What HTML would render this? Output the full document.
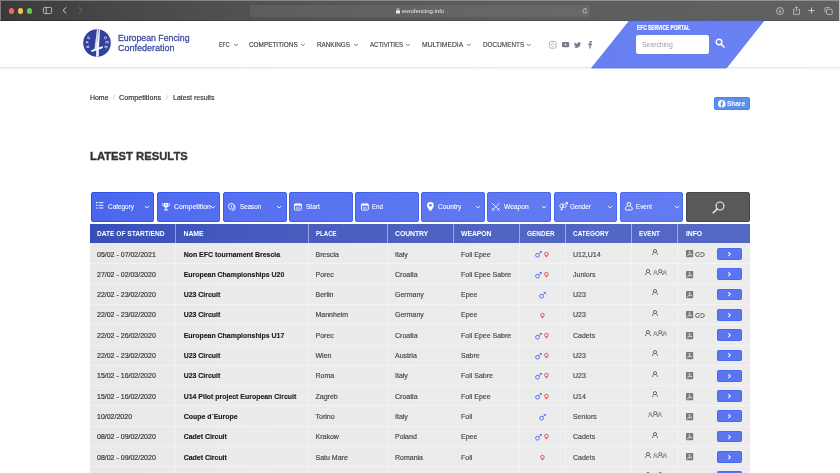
<!DOCTYPE html>
<html>
<head>
<meta charset="utf-8">
<style>
*{box-sizing:border-box;margin:0;padding:0}
html,body{width:840px;height:473px;overflow:hidden;background:#fff;font-family:"Liberation Sans",sans-serif;color:#222}
.t{position:absolute;white-space:nowrap}
.a{position:absolute}
svg{position:absolute;overflow:visible}
#chrome{position:absolute;left:0;top:0;width:839px;height:20.5px;background:#3a3a3a;border-top:1px solid rgba(255,255,255,.3);border-left:1px solid #7d7d7d;border-bottom:1px solid rgba(0,0,0,.25)}
#chr2{position:absolute;left:839px;top:0;width:1px;height:20.5px;background:#b5b5b5}
.tl{position:absolute;top:7.8px;width:5.8px;height:5.8px;border-radius:50%}
#url{position:absolute;left:249.5px;top:5px;width:340.5px;height:11.8px;border-radius:2.5px;background:rgba(255,255,255,.07)}
#ov{position:absolute;left:0;top:0;width:840px;height:473px;background:linear-gradient(to right,rgba(255,255,255,0.000) 0.00%,rgba(255,255,255,0.038) 7.14%,rgba(255,255,255,0.069) 14.29%,rgba(255,255,255,0.095) 21.43%,rgba(255,255,255,0.116) 28.57%,rgba(255,255,255,0.133) 35.71%,rgba(255,255,255,0.147) 42.86%,rgba(255,255,255,0.158) 50.00%,rgba(255,255,255,0.168) 57.14%,rgba(255,255,255,0.175) 64.29%,rgba(255,255,255,0.182) 71.43%,rgba(255,255,255,0.187) 78.57%,rgba(255,255,255,0.191) 85.71%,rgba(255,255,255,0.194) 92.86%,rgba(255,255,255,0.197) 100.00%)}
#hdrline{position:absolute;left:0;top:66.8px;width:840px;height:1.4px;background:#e4e4e4}
#hdrsh{position:absolute;left:0;top:68.2px;width:840px;height:1.6px;background:linear-gradient(#f0f0f0,#fff)}
.fb{position:absolute;top:191.6px;width:63.7px;height:30.1px;background:#3f5dee;border:1px solid #1f48ea;border-radius:2px}
.row{position:absolute;left:90px;width:660px;height:20.3px;background:#e8e8e8;border-bottom:1px solid #efefef}
.vs{position:absolute;top:243.5px;width:1px;height:230px;background:#f0f0f0}
.hs{position:absolute;top:223.8px;width:1px;height:19.3px;background:#8894dc}
.go{position:absolute;left:717px;width:25px;height:11.8px;background:#3354ef;border:1px solid #1c45ec;border-radius:1.5px}
</style>
</head>
<body>
<div id="wrap" style="position:absolute;left:0;top:0;width:840px;height:473px;will-change:transform">
<div id="chrome"></div><div id="chr2"></div>
<div class="tl" style="left:8.6px;background:#ee6a5f"></div>
<div class="tl" style="left:17.6px;background:#f5bf4f"></div>
<div class="tl" style="left:26.5px;background:#62c655"></div>
<div id="url"></div>
<svg style="left:43px;top:7px" width="9" height="7" viewBox="0 0 9 7"><rect x="0.4" y="0.4" width="8.2" height="6.2" rx="1.2" fill="none" stroke="#cfcfcf" stroke-width="0.8"/><line x1="3.2" y1="0.4" x2="3.2" y2="6.6" stroke="#cfcfcf" stroke-width="0.8"/></svg>
<svg style="left:62px;top:7.3px" width="5" height="7" viewBox="0 0 5 7"><path d="M4 0.5 L1 3.3 L4 6.1" fill="none" stroke="#e4e4e4" stroke-width="0.9" stroke-linecap="round" stroke-linejoin="round"/></svg>
<svg style="left:78px;top:7.3px" width="5" height="7" viewBox="0 0 5 7"><path d="M1 0.5 L4 3.3 L1 6.1" fill="none" stroke="#6a6a6a" stroke-width="0.9" stroke-linecap="round" stroke-linejoin="round"/></svg>
<svg style="left:396.3px;top:8px" width="4" height="6" viewBox="0 0 4 6"><rect x="0" y="2.2" width="4" height="3.3" rx="0.5" fill="#e6e6e6"/><path d="M0.9 2.4 V1.5 A1.1 1.1 0 0 1 3.1 1.5 V2.4" fill="none" stroke="#e6e6e6" stroke-width="0.6"/></svg>
<svg style="left:582px;top:8px" width="6" height="6" viewBox="0 0 6 6"><path d="M5 3 A2.1 2.1 0 1 1 3.8 1.1" fill="none" stroke="#c8c8c8" stroke-width="0.7"/><path d="M3.2 0 L4.8 1.1 L3.2 2.2 Z" fill="#c8c8c8"/></svg>
<svg style="left:776px;top:6.5px" width="8" height="8" viewBox="0 0 8 8"><circle cx="4" cy="4" r="3.5" fill="none" stroke="#cfcfcf" stroke-width="0.7"/><path d="M4 2.2 V5.4 M2.8 4.3 L4 5.5 L5.2 4.3" fill="none" stroke="#cfcfcf" stroke-width="0.7"/></svg>
<svg style="left:792.5px;top:5.5px" width="7" height="9" viewBox="0 0 7 9"><path d="M2 3.2 H0.6 V8.3 H6.4 V3.2 H5" fill="none" stroke="#cfcfcf" stroke-width="0.7"/><path d="M3.5 5.5 V0.8 M2.2 2 L3.5 0.7 L4.8 2" fill="none" stroke="#cfcfcf" stroke-width="0.7"/></svg>
<svg style="left:808px;top:7.3px" width="7" height="7" viewBox="0 0 7 7"><path d="M3.5 0.5 V6.5 M0.5 3.5 H6.5" fill="none" stroke="#d6d6d6" stroke-width="0.8"/></svg>
<svg style="left:823.5px;top:6.5px" width="9" height="8" viewBox="0 0 9 8"><rect x="2.6" y="2.2" width="5.6" height="5.3" rx="1.1" fill="#3a3a3a" stroke="#cfcfcf" stroke-width="0.7"/><path d="M1 5.6 V1.6 A1 1 0 0 1 2 0.6 H5.6" fill="none" stroke="#cfcfcf" stroke-width="0.7"/></svg>
<div id="hdrline"></div><div id="hdrsh"></div>
<svg style="left:0;top:0" width="840" height="80" viewBox="0 0 840 80"><polygon points="629.3,21 763.7,21 726.4,68 591.6,68" fill="#4663ef" stroke="#2a50ec" stroke-width="0.8"/></svg>
<div class="a" style="left:635.8px;top:34.7px;width:73px;height:19.5px;background:#fff;border-radius:2.2px"></div>
<svg style="left:714.5px;top:38px" width="10" height="10" viewBox="0 0 10 10"><circle cx="4" cy="4" r="2.8" fill="none" stroke="#fff" stroke-width="1.4"/><path d="M6.2 6.2 L9 9" stroke="#fff" stroke-width="1.6" stroke-linecap="round"/></svg>
<svg style="left:82.6px;top:29.1px" width="28" height="28" viewBox="0 0 28 28">
<circle cx="14" cy="14" r="13.8" fill="#243697"/>
<path d="M14 0.300 L15.300 0.300 L13.600 21 L11.200 21.500 Z" fill="#dde1f2"/>
<path d="M15.900 0.300 L17 0.600 L15.900 19 L15.700 27.600 L13.100 27.700 L13.400 19 L14.600 10 Z" fill="#f6f7fc"/>
<path d="M8.100 21.300 L19.500 17.300 L20 18.900 L8.700 23 Z" fill="#fff"/>
<path id="arcL" d="M6.8 18.3 A 8.4 8.4 0 0 1 8.06 8.06" fill="none"/>
<path id="arcR" d="M20.5 8.4 A 8.4 8.4 0 0 1 20.5 19.6" fill="none"/>
<text font-family="Liberation Sans" font-weight="bold" font-size="3.9" fill="#fff" letter-spacing="1.3"><textPath href="#arcL">EFC</textPath></text>
<text font-family="Liberation Sans" font-weight="bold" font-size="3.9" fill="#fff" letter-spacing="1.3"><textPath href="#arcR">CEE</textPath></text>
</svg>
<svg style="left:233.70px;top:43.60px" width="3.8" height="2.0" viewBox="0 0 3.8 2.0"><path d="M0.3 0.3 L1.90 1.70 L3.50 0.3" fill="none" stroke="#444" stroke-width="0.80" stroke-linecap="round" stroke-linejoin="round"/></svg>
<svg style="left:301.40px;top:43.60px" width="3.8" height="2.0" viewBox="0 0 3.8 2.0"><path d="M0.3 0.3 L1.90 1.70 L3.50 0.3" fill="none" stroke="#444" stroke-width="0.80" stroke-linecap="round" stroke-linejoin="round"/></svg>
<svg style="left:354.10px;top:43.60px" width="3.8" height="2.0" viewBox="0 0 3.8 2.0"><path d="M0.3 0.3 L1.90 1.70 L3.50 0.3" fill="none" stroke="#444" stroke-width="0.80" stroke-linecap="round" stroke-linejoin="round"/></svg>
<svg style="left:406.40px;top:43.60px" width="3.8" height="2.0" viewBox="0 0 3.8 2.0"><path d="M0.3 0.3 L1.90 1.70 L3.50 0.3" fill="none" stroke="#444" stroke-width="0.80" stroke-linecap="round" stroke-linejoin="round"/></svg>
<svg style="left:466.60px;top:43.60px" width="3.8" height="2.0" viewBox="0 0 3.8 2.0"><path d="M0.3 0.3 L1.90 1.70 L3.50 0.3" fill="none" stroke="#444" stroke-width="0.80" stroke-linecap="round" stroke-linejoin="round"/></svg>
<svg style="left:527.40px;top:43.60px" width="3.8" height="2.0" viewBox="0 0 3.8 2.0"><path d="M0.3 0.3 L1.90 1.70 L3.50 0.3" fill="none" stroke="#444" stroke-width="0.80" stroke-linecap="round" stroke-linejoin="round"/></svg>
<svg style="left:549.2px;top:40.9px" width="7.6" height="7.6" viewBox="0 0 7.6 7.6"><rect x="0.4" y="0.4" width="6.8" height="6.8" rx="1.8" fill="none" stroke="#8b8b8b" stroke-width="0.8"/><circle cx="3.8" cy="3.8" r="1.5" fill="none" stroke="#a0a0a0" stroke-width="0.7"/></svg>
<svg style="left:562px;top:42px" width="7.2" height="5.2" viewBox="0 0 7.2 5.2"><rect x="0" y="0" width="7.2" height="5.2" rx="1.2" fill="#5c5e70"/><path d="M2.9 1.5 L4.7 2.6 L2.9 3.7 Z" fill="#fff"/></svg>
<svg style="left:573.8px;top:41.8px" width="7.2" height="6.2" viewBox="0 0 24 20"><path d="M23.6 2.4c-.9.4-1.8.7-2.8.8 1-.6 1.800-1.600 2.100-2.700-.9.600-2 1-3.100 1.200C18.900.7 17.600.1 16.300.1c-2.700 0-4.900 2.200-4.900 4.900 0 .4 0 .8.100 1.100C7.500 5.900 3.900 4 1.500.9 1.100 1.700.8 2.500.8 3.400c0 1.700.9 3.200 2.200 4.100-.8 0-1.600-.2-2.200-.6v.1c0 2.400 1.700 4.400 3.900 4.800-.4.100-.8.200-1.300.2-.3 0-.6 0-.9-.1.600 2 2.400 3.400 4.600 3.400-1.700 1.300-3.800 2.100-6.100 2.100-.4 0-.8 0-1.200-.1 2.200 1.400 4.800 2.200 7.500 2.200 9.100 0 14-7.500 14-14v-.6c1-.7 1.800-1.600 2.400-2.500z" fill="#5c5e70"/></svg>
<svg style="left:588px;top:41px" width="4.2" height="7.6" viewBox="0 0 10 18"><path d="M6.600 18V9.800h2.700l.4-3.200H6.600V4.600c0-.9.300-1.600 1.600-1.600h1.700V.1C9.600.1 8.600 0 7.500 0 5.100 0 3.400 1.500 3.400 4.200v2.400H.6v3.200h2.800V18z" fill="#5c5e70"/></svg>
<div class="a" style="left:714px;top:97.2px;width:36px;height:13px;background:#3377ea;border:1px solid #1669e6;border-radius:1.8px"></div>
<svg style="left:717.5px;top:100.4px" width="7.6" height="7.6" viewBox="0 0 7.6 7.6"><circle cx="3.8" cy="3.8" r="3.8" fill="#fff"/><path d="M4.25 7.6 V4.6 H5.2 L5.35 3.5 H4.25 V2.9 C4.25 2.5 4.4 2.3 4.85 2.3 H5.4 V1.3 C5.2 1.25 4.85 1.2 4.5 1.2 C3.6 1.2 3.05 1.75 3.05 2.7 V3.5 H2.2 V4.6 H3.05 V7.6 Z" fill="#3377ea"/></svg>
<div class="fb" style="left:90.65px"></div>
<div class="fb" style="left:156.78px"></div>
<div class="fb" style="left:222.91px"></div>
<div class="fb" style="left:289.04px"></div>
<div class="fb" style="left:355.17px"></div>
<div class="fb" style="left:421.30px"></div>
<div class="fb" style="left:487.43px"></div>
<div class="fb" style="left:553.56px"></div>
<div class="fb" style="left:619.69px"></div>
<div class="fb" style="left:685.9px;width:63.8px;background:#323232;border-color:#1c1c1c"></div>
<svg style="left:711.5px;top:200.5px" width="14" height="13" viewBox="0 0 14 13"><circle cx="8" cy="5" r="4" fill="none" stroke="#f2f2f2" stroke-width="1.1"/><path d="M5.2 8 L1.2 11.8" stroke="#f2f2f2" stroke-width="1.5" stroke-linecap="round"/></svg>
<svg style="left:144.90px;top:205.85px" width="4.2" height="2.3" viewBox="0 0 4.2 2.3"><path d="M0.3 0.3 L2.10 2.00 L3.90 0.3" fill="none" stroke="#fff" stroke-width="0.90" stroke-linecap="round" stroke-linejoin="round"/></svg>
<svg style="left:211.10px;top:205.85px" width="4.2" height="2.3" viewBox="0 0 4.2 2.3"><path d="M0.3 0.3 L2.10 2.00 L3.90 0.3" fill="none" stroke="#fff" stroke-width="0.90" stroke-linecap="round" stroke-linejoin="round"/></svg>
<svg style="left:277.10px;top:205.85px" width="4.2" height="2.3" viewBox="0 0 4.2 2.3"><path d="M0.3 0.3 L2.10 2.00 L3.90 0.3" fill="none" stroke="#fff" stroke-width="0.90" stroke-linecap="round" stroke-linejoin="round"/></svg>
<svg style="left:475.90px;top:205.85px" width="4.2" height="2.3" viewBox="0 0 4.2 2.3"><path d="M0.3 0.3 L2.10 2.00 L3.90 0.3" fill="none" stroke="#fff" stroke-width="0.90" stroke-linecap="round" stroke-linejoin="round"/></svg>
<svg style="left:541.90px;top:205.85px" width="4.2" height="2.3" viewBox="0 0 4.2 2.3"><path d="M0.3 0.3 L2.10 2.00 L3.90 0.3" fill="none" stroke="#fff" stroke-width="0.90" stroke-linecap="round" stroke-linejoin="round"/></svg>
<svg style="left:608.30px;top:205.85px" width="4.2" height="2.3" viewBox="0 0 4.2 2.3"><path d="M0.3 0.3 L2.10 2.00 L3.90 0.3" fill="none" stroke="#fff" stroke-width="0.90" stroke-linecap="round" stroke-linejoin="round"/></svg>
<svg style="left:674.80px;top:205.85px" width="4.2" height="2.3" viewBox="0 0 4.2 2.3"><path d="M0.3 0.3 L2.10 2.00 L3.90 0.3" fill="none" stroke="#fff" stroke-width="0.90" stroke-linecap="round" stroke-linejoin="round"/></svg>
<svg style="left:96px;top:202.2px" width="7.6" height="6.8" viewBox="0 0 7.6 6.8"><path d="M0 0.6 H1.4 M0 3.3 H1.4 M0 6 H1.4" stroke="#fff" stroke-width="1.1"/><path d="M2.6 0.6 H7.4 M2.6 3.3 H7.4 M2.6 6 H7.4" stroke="#fff" stroke-width="0.9"/></svg>
<svg style="left:161.8px;top:203px" width="8" height="7.8" viewBox="0 0 8 7.8"><path d="M1.8 0 H6.2 V2.6 A2.2 2.2 0 0 1 1.800 2.600 Z" fill="#fff"/><path d="M1.8 0.800 H0.400 V1.600 A1.500 1.500 0 0 0 2 3.100 M6.200 0.800 H7.600 V1.600 A1.500 1.500 0 0 1 6 3.100" fill="none" stroke="#fff" stroke-width="0.700"/><rect x="3.500" y="4.500" width="1" height="1.800" fill="#fff"/><rect x="2.200" y="6.200" width="3.600" height="1.300" rx="0.300" fill="#fff"/><circle cx="4" cy="2" r="0.800" fill="#3f5dee"/></svg>
<svg style="left:228px;top:203px" width="8" height="8.200" viewBox="0 0 8 8.200"><circle cx="3.400" cy="3.400" r="2.900" fill="none" stroke="#fff" stroke-width="0.950"/><path d="M2.800 2.700 L3.500 2.200 V4.700" fill="none" stroke="#fff" stroke-width="0.700"/><path d="M5.800 1.500 C7.400 3 7.600 5.500 6.400 7 C5.600 7.900 4.400 7.800 4 7" fill="none" stroke="#fff" stroke-width="0.800"/></svg>
<svg style="left:294.00px;top:203.20px" width="7.800" height="7.600" viewBox="0 0 7.800 7.600"><rect x="0.450" y="1" width="6.900" height="6.100" rx="0.900" fill="none" stroke="#fff" stroke-width="0.900"/><rect x="0.450" y="1" width="6.900" height="1.700" fill="#fff"/><path d="M2.100 0 V1.500 M5.700 0 V1.500" stroke="#fff" stroke-width="0.900"/><path d="M2.700 3.900 V6 M5.100 3.900 V6 M3.900 3.900 V6" stroke="#fff" stroke-width="0.700" opacity="0.900"/></svg>
<svg style="left:360.60px;top:203.20px" width="7.800" height="7.600" viewBox="0 0 7.800 7.600"><rect x="0.450" y="1" width="6.900" height="6.100" rx="0.900" fill="none" stroke="#fff" stroke-width="0.900"/><rect x="0.450" y="1" width="6.900" height="1.700" fill="#fff"/><path d="M2.100 0 V1.500 M5.700 0 V1.500" stroke="#fff" stroke-width="0.900"/><path d="M2.700 3.900 V6 M5.100 3.900 V6 M3.900 3.900 V6" stroke="#fff" stroke-width="0.700" opacity="0.900"/></svg>
<svg style="left:427px;top:202.300px" width="6.800" height="9" viewBox="0 0 6.800 9"><path d="M3.400 0 A3.400 3.400 0 0 1 6.800 3.400 C6.800 5.600 3.400 9 3.400 9 C3.400 9 0 5.600 0 3.400 A3.400 3.400 0 0 1 3.400 0 Z" fill="#fff"/><circle cx="3.400" cy="3.300" r="1.300" fill="#3d5cf0"/></svg>
<svg style="left:492.300px;top:203px" width="7.600" height="7.600" viewBox="0 0 7.600 7.600"><path d="M0.400 0.400 L6.600 6.600 M7.200 0.400 L1 6.600" stroke="#fff" stroke-width="0.800" stroke-linecap="round"/><path d="M0.300 5.500 L2.100 7.300 M7.300 5.500 L5.500 7.300" stroke="#fff" stroke-width="0.900" stroke-linecap="round"/><path d="M0.200 7.400 L1.200 6.400 M7.400 7.400 L6.400 6.400" stroke="#fff" stroke-width="0.900" stroke-linecap="round"/></svg>
<svg style="left:559px;top:201.700px" width="9" height="9" viewBox="0 0 9 9"><circle cx="2.700" cy="3.800" r="1.900" fill="none" stroke="#fff" stroke-width="0.800"/><circle cx="5.300" cy="3.800" r="1.900" fill="none" stroke="#fff" stroke-width="0.800"/><path d="M6.600 2.400 L8.300 0.700 M6.600 0.500 H8.500 V2.400" fill="none" stroke="#fff" stroke-width="0.900"/><path d="M2.700 5.700 V8.600 M1.400 7.300 H4" stroke="#fff" stroke-width="0.800"/></svg>
<svg style="left:625px;top:202.300px" width="7.800" height="8.400" viewBox="0 0 7.800 8.400"><circle cx="3.900" cy="2.300" r="1.850" fill="none" stroke="#fff" stroke-width="1"/><path d="M2.300 4.300 C0.900 4.800 0.400 6 0.400 7.100 C0.400 7.700 0.800 8 1.400 8 H6.400 C7 8 7.400 7.700 7.400 7.100 C7.400 6 6.900 4.800 5.500 4.300" fill="none" stroke="#fff" stroke-width="1"/></svg>
<div class="a" style="left:90px;top:223.800px;width:660px;height:19.300px;background:#2c44b5"></div>
<div class="hs" style="left:175.0px"></div><div class="hs" style="left:307.8px"></div><div class="hs" style="left:386.9px"></div><div class="hs" style="left:452.9px"></div><div class="hs" style="left:518.9px"></div><div class="hs" style="left:565.0px"></div><div class="hs" style="left:631.1px"></div><div class="hs" style="left:677.2px"></div>
<div class="a" style="left:90px;top:243.1px;width:660px;height:230px;background:#e8e8e8"></div><div class="a" style="left:90px;top:263.30px;width:660px;height:1px;background:#f1f1f1"></div><div class="a" style="left:90px;top:283.60px;width:660px;height:1px;background:#f1f1f1"></div><div class="a" style="left:90px;top:303.90px;width:660px;height:1px;background:#f1f1f1"></div><div class="a" style="left:90px;top:324.20px;width:660px;height:1px;background:#f1f1f1"></div><div class="a" style="left:90px;top:344.50px;width:660px;height:1px;background:#f1f1f1"></div><div class="a" style="left:90px;top:364.80px;width:660px;height:1px;background:#f1f1f1"></div><div class="a" style="left:90px;top:385.10px;width:660px;height:1px;background:#f1f1f1"></div><div class="a" style="left:90px;top:405.40px;width:660px;height:1px;background:#f1f1f1"></div><div class="a" style="left:90px;top:425.70px;width:660px;height:1px;background:#f1f1f1"></div><div class="a" style="left:90px;top:446.00px;width:660px;height:1px;background:#f1f1f1"></div><div class="a" style="left:90px;top:466.30px;width:660px;height:1px;background:#f1f1f1"></div>
<div class="vs" style="left:175.0px"></div><div class="vs" style="left:307.8px"></div><div class="vs" style="left:386.9px"></div><div class="vs" style="left:452.9px"></div><div class="vs" style="left:518.9px"></div><div class="vs" style="left:565.0px"></div><div class="vs" style="left:631.1px"></div><div class="vs" style="left:677.2px"></div>
<svg width="0" height="0" style="left:0;top:0"><defs>
<g id="male"><circle cx="2.500" cy="4.200" r="1.900" fill="none" stroke="#2a4cf4" stroke-width="0.950"/><path d="M3.900 2.800 L5.300 1.400" stroke="#2a4cf4" stroke-width="0.950"/><path d="M4.300 0.100 H6.700 V2.500 Z" fill="#1f43f5"/></g>
<g id="female"><circle cx="2.400" cy="2.100" r="1.800" fill="none" stroke="#d62c2c" stroke-width="0.950"/><path d="M1.200 3.800 H3.600 L2.400 5.600 Z" fill="#d22020"/></g>
<g id="person"><circle cx="3" cy="2.100" r="1.600" fill="none" stroke="#2b2b2b" stroke-width="0.850"/><path d="M1.900 3.500 C1.200 4 0.700 4.800 0.500 5.600 M4.100 3.500 C4.800 4 5.300 4.800 5.500 5.600" fill="none" stroke="#2b2b2b" stroke-width="0.850" stroke-linecap="round"/></g>
<g id="psm"><circle cx="2.300" cy="2.850" r="1.200" fill="none" stroke="#555" stroke-width="0.750"/><path d="M1.500 3.900 C0.900 4.300 0.550 4.900 0.400 5.600 M3.100 3.900 C3.700 4.300 4.050 4.900 4.200 5.600" fill="none" stroke="#555" stroke-width="0.750" stroke-linecap="round"/></g>
<g id="group"><use href="#psm" x="0" y="0"/><use href="#psm" x="9.500" y="0"/><g transform="translate(4.300,0)"><use href="#person"/></g></g>
<g id="pdf"><rect x="0" y="0" width="7.200" height="7.200" rx="0.700" fill="#5a5a5a"/><path d="M3.500 1.200 C4.300 1.200 3.900 2.900 3.500 3.700 C3 4.700 2.200 5.800 1.500 5.900 C0.900 5.900 1.600 4.900 3.500 4.500 C4.700 4.200 6.200 4.300 6 4.900 C5.800 5.400 4.300 4.600 3.600 3.600 C3.100 2.800 2.900 1.200 3.500 1.200 Z" fill="none" stroke="#f2f2f2" stroke-width="0.600"/></g>
<g id="link"><path d="M4.200 0.550 H2.500 A1.950 1.950 0 0 0 2.500 4.450 H3.300 M5.600 4.450 H7.300 A1.950 1.950 0 0 0 7.300 0.550 H6.500" fill="none" stroke="#3c3c3c" stroke-width="1" stroke-linecap="round"/><path d="M3.500 3.300 C4.400 3.500 5.400 1.500 6.300 1.700" fill="none" stroke="#3c3c3c" stroke-width="1" stroke-linecap="round"/></g>
<g id="arr"><path d="M0.600 0.600 L2.300 2.200 L0.600 3.800" fill="none" stroke="#fff" stroke-width="1.050" stroke-linecap="round" stroke-linejoin="round"/></g>
</defs></svg>
<svg style="left:535.10px;top:251.30px" width="1" height="1"><use href="#male"/></svg><svg style="left:544.20px;top:251.60px" width="1" height="1"><use href="#female"/></svg><svg style="left:651.90px;top:248.80px" width="1" height="1"><use href="#person"/></svg><svg style="left:686.10px;top:250.40px" width="1" height="1"><use href="#pdf"/></svg><svg style="left:695.40px;top:251.60px" width="1" height="1"><use href="#link"/></svg><div class="go" style="top:248.00px"></div><svg style="left:728.30px;top:251.80px" width="1" height="1"><use href="#arr"/></svg>
<svg style="left:535.10px;top:271.60px" width="1" height="1"><use href="#male"/></svg><svg style="left:544.20px;top:271.90px" width="1" height="1"><use href="#female"/></svg><svg style="left:644.90px;top:269.10px" width="1" height="1"><use href="#person"/></svg><svg style="left:652.60px;top:269.10px" width="1" height="1"><use href="#group"/></svg><svg style="left:686.10px;top:270.70px" width="1" height="1"><use href="#pdf"/></svg><div class="go" style="top:268.30px"></div><svg style="left:728.30px;top:272.10px" width="1" height="1"><use href="#arr"/></svg>
<svg style="left:538.90px;top:291.90px" width="1" height="1"><use href="#male"/></svg><svg style="left:651.90px;top:289.40px" width="1" height="1"><use href="#person"/></svg><svg style="left:686.10px;top:291.00px" width="1" height="1"><use href="#pdf"/></svg><div class="go" style="top:288.60px"></div><svg style="left:728.30px;top:292.40px" width="1" height="1"><use href="#arr"/></svg>
<svg style="left:540.35px;top:312.50px" width="1" height="1"><use href="#female"/></svg><svg style="left:651.90px;top:309.70px" width="1" height="1"><use href="#person"/></svg><svg style="left:686.10px;top:311.30px" width="1" height="1"><use href="#pdf"/></svg><svg style="left:695.40px;top:312.50px" width="1" height="1"><use href="#link"/></svg><div class="go" style="top:308.90px"></div><svg style="left:728.30px;top:312.70px" width="1" height="1"><use href="#arr"/></svg>
<svg style="left:535.10px;top:332.50px" width="1" height="1"><use href="#male"/></svg><svg style="left:544.20px;top:332.80px" width="1" height="1"><use href="#female"/></svg><svg style="left:644.90px;top:330.00px" width="1" height="1"><use href="#person"/></svg><svg style="left:652.60px;top:330.00px" width="1" height="1"><use href="#group"/></svg><svg style="left:686.10px;top:331.60px" width="1" height="1"><use href="#pdf"/></svg><div class="go" style="top:329.20px"></div><svg style="left:728.30px;top:333.00px" width="1" height="1"><use href="#arr"/></svg>
<svg style="left:535.10px;top:352.80px" width="1" height="1"><use href="#male"/></svg><svg style="left:544.20px;top:353.10px" width="1" height="1"><use href="#female"/></svg><svg style="left:651.90px;top:350.30px" width="1" height="1"><use href="#person"/></svg><svg style="left:686.10px;top:351.90px" width="1" height="1"><use href="#pdf"/></svg><div class="go" style="top:349.50px"></div><svg style="left:728.30px;top:353.30px" width="1" height="1"><use href="#arr"/></svg>
<svg style="left:535.10px;top:373.10px" width="1" height="1"><use href="#male"/></svg><svg style="left:544.20px;top:373.40px" width="1" height="1"><use href="#female"/></svg><svg style="left:651.90px;top:370.60px" width="1" height="1"><use href="#person"/></svg><svg style="left:686.10px;top:372.20px" width="1" height="1"><use href="#pdf"/></svg><div class="go" style="top:369.80px"></div><svg style="left:728.30px;top:373.60px" width="1" height="1"><use href="#arr"/></svg>
<svg style="left:535.10px;top:393.40px" width="1" height="1"><use href="#male"/></svg><svg style="left:544.20px;top:393.70px" width="1" height="1"><use href="#female"/></svg><svg style="left:651.90px;top:390.90px" width="1" height="1"><use href="#person"/></svg><svg style="left:686.10px;top:392.50px" width="1" height="1"><use href="#pdf"/></svg><div class="go" style="top:390.10px"></div><svg style="left:728.30px;top:393.90px" width="1" height="1"><use href="#arr"/></svg>
<svg style="left:538.90px;top:413.70px" width="1" height="1"><use href="#male"/></svg><svg style="left:647.60px;top:411.20px" width="1" height="1"><use href="#group"/></svg><svg style="left:686.10px;top:412.80px" width="1" height="1"><use href="#pdf"/></svg><div class="go" style="top:410.40px"></div><svg style="left:728.30px;top:414.20px" width="1" height="1"><use href="#arr"/></svg>
<svg style="left:535.10px;top:434.00px" width="1" height="1"><use href="#male"/></svg><svg style="left:544.20px;top:434.30px" width="1" height="1"><use href="#female"/></svg><svg style="left:651.90px;top:431.50px" width="1" height="1"><use href="#person"/></svg><svg style="left:686.10px;top:433.10px" width="1" height="1"><use href="#pdf"/></svg><div class="go" style="top:430.70px"></div><svg style="left:728.30px;top:434.50px" width="1" height="1"><use href="#arr"/></svg>
<svg style="left:540.35px;top:454.60px" width="1" height="1"><use href="#female"/></svg><svg style="left:644.90px;top:451.80px" width="1" height="1"><use href="#person"/></svg><svg style="left:652.60px;top:451.80px" width="1" height="1"><use href="#group"/></svg><svg style="left:686.10px;top:453.40px" width="1" height="1"><use href="#pdf"/></svg><div class="go" style="top:451.00px"></div><svg style="left:728.30px;top:454.80px" width="1" height="1"><use href="#arr"/></svg>
<svg style="left:644.90px;top:472.10px" width="1" height="1"><use href="#person"/></svg><svg style="left:652.60px;top:472.10px" width="1" height="1"><use href="#group"/></svg><svg style="left:686.10px;top:473.70px" width="1" height="1"><use href="#pdf"/></svg><div class="go" style="top:471.30px"></div><svg style="left:728.30px;top:475.10px" width="1" height="1"><use href="#arr"/></svg>

<div class="t" style="left:401.70px;top:7.28px;font-size:6.20px;line-height:7.44px;font-weight:normal;color:#e8e8e8;transform:scaleX(0.9558);transform-origin:0 50%;">eurofencing.info</div>
<div class="t" style="left:117.50px;top:32.82px;font-size:9.30px;line-height:11.16px;font-weight:normal;color:#25369a;transform:scaleX(0.9410);transform-origin:0 50%;-webkit-text-stroke:0.3px #2f3f9e;">European Fencing</div>
<div class="t" style="left:117.50px;top:43.02px;font-size:9.30px;line-height:11.16px;font-weight:normal;color:#25369a;transform:scaleX(0.9674);transform-origin:0 50%;-webkit-text-stroke:0.3px #2f3f9e;">Confederation</div>
<div class="t" style="left:218.80px;top:41.18px;font-size:6.70px;line-height:8.04px;font-weight:normal;color:#1c1c1c;transform:scaleX(0.7850);transform-origin:0 50%;-webkit-text-stroke:0.15px #1c1c1c;">EFC</div>
<div class="t" style="left:249.30px;top:41.18px;font-size:6.70px;line-height:8.04px;font-weight:normal;color:#1c1c1c;transform:scaleX(0.9567);transform-origin:0 50%;-webkit-text-stroke:0.15px #1c1c1c;">COMPETITIONS</div>
<div class="t" style="left:317.00px;top:41.18px;font-size:6.70px;line-height:8.04px;font-weight:normal;color:#1c1c1c;transform:scaleX(0.9445);transform-origin:0 50%;-webkit-text-stroke:0.15px #1c1c1c;">RANKINGS</div>
<div class="t" style="left:369.50px;top:41.18px;font-size:6.70px;line-height:8.04px;font-weight:normal;color:#1c1c1c;transform:scaleX(0.9060);transform-origin:0 50%;-webkit-text-stroke:0.15px #1c1c1c;">ACTIVITIES</div>
<div class="t" style="left:421.80px;top:41.18px;font-size:6.70px;line-height:8.04px;font-weight:normal;color:#1c1c1c;transform:scaleX(1.0110);transform-origin:0 50%;-webkit-text-stroke:0.15px #1c1c1c;">MULTIMEDIA</div>
<div class="t" style="left:482.50px;top:41.18px;font-size:6.70px;line-height:8.04px;font-weight:normal;color:#1c1c1c;transform:scaleX(0.9557);transform-origin:0 50%;-webkit-text-stroke:0.15px #1c1c1c;">DOCUMENTS</div>
<div class="t" style="left:637.00px;top:23.92px;font-size:6.30px;line-height:7.56px;font-weight:bold;color:#fff;transform:scaleX(0.7676);transform-origin:0 50%;-webkit-text-stroke:0.2px #fff;">EFC SERVICE PORTAL</div>
<div class="t" style="left:642.00px;top:39.72px;font-size:7.80px;line-height:9.36px;font-weight:normal;color:#858585;transform:scaleX(0.8744);transform-origin:0 50%;">Searching</div>
<div class="t" style="left:89.50px;top:94.20px;font-size:7.00px;line-height:8.40px;font-weight:normal;color:#151515;transform:scaleX(0.9900);transform-origin:0 50%;-webkit-text-stroke:0.15px #151515;">Home</div>
<div class="t" style="left:113.00px;top:94.20px;font-size:7.00px;line-height:8.40px;font-weight:normal;color:#c4c4c4;">/</div>
<div class="t" style="left:119.30px;top:94.20px;font-size:7.00px;line-height:8.40px;font-weight:normal;color:#151515;transform:scaleX(1.0279);transform-origin:0 50%;-webkit-text-stroke:0.15px #151515;">Competitions</div>
<div class="t" style="left:166.00px;top:94.20px;font-size:7.00px;line-height:8.40px;font-weight:normal;color:#c4c4c4;">/</div>
<div class="t" style="left:172.50px;top:94.20px;font-size:7.00px;line-height:8.40px;font-weight:normal;color:#151515;transform:scaleX(0.9966);transform-origin:0 50%;-webkit-text-stroke:0.15px #151515;">Latest results</div>
<div class="t" style="left:727.00px;top:99.80px;font-size:7.00px;line-height:8.40px;font-weight:bold;color:#fff;transform:scaleX(0.9246);transform-origin:0 50%;">Share</div>
<div class="t" style="left:89.70px;top:148.84px;font-size:11.60px;line-height:13.92px;font-weight:bold;color:#232323;transform:scaleX(0.9712);transform-origin:0 50%;-webkit-text-stroke:0.35px #232323;">LATEST RESULTS</div>
<div class="t" style="left:107.80px;top:203.18px;font-size:6.70px;line-height:8.04px;font-weight:normal;color:#fff;transform:scaleX(0.9580);transform-origin:0 50%;-webkit-text-stroke:0.08px #fff;">Category</div>
<div class="t" style="left:173.80px;top:203.18px;font-size:6.70px;line-height:8.04px;font-weight:normal;color:#fff;transform:scaleX(1.0340);transform-origin:0 50%;-webkit-text-stroke:0.08px #fff;">Competition</div>
<div class="t" style="left:239.80px;top:203.18px;font-size:6.70px;line-height:8.04px;font-weight:normal;color:#fff;transform:scaleX(0.9344);transform-origin:0 50%;-webkit-text-stroke:0.08px #fff;">Season</div>
<div class="t" style="left:305.60px;top:203.18px;font-size:6.70px;line-height:8.04px;font-weight:normal;color:#fff;transform:scaleX(0.9699);transform-origin:0 50%;-webkit-text-stroke:0.08px #fff;">Start</div>
<div class="t" style="left:372.00px;top:203.18px;font-size:6.70px;line-height:8.04px;font-weight:normal;color:#fff;transform:scaleX(0.9239);transform-origin:0 50%;-webkit-text-stroke:0.08px #fff;">End</div>
<div class="t" style="left:437.80px;top:203.18px;font-size:6.70px;line-height:8.04px;font-weight:normal;color:#fff;transform:scaleX(0.9991);transform-origin:0 50%;-webkit-text-stroke:0.08px #fff;">Country</div>
<div class="t" style="left:504.30px;top:203.18px;font-size:6.70px;line-height:8.04px;font-weight:normal;color:#fff;transform:scaleX(0.9961);transform-origin:0 50%;-webkit-text-stroke:0.08px #fff;">Weapon</div>
<div class="t" style="left:570.40px;top:203.18px;font-size:6.70px;line-height:8.04px;font-weight:normal;color:#fff;transform:scaleX(0.9367);transform-origin:0 50%;-webkit-text-stroke:0.08px #fff;">Gender</div>
<div class="t" style="left:636.40px;top:203.18px;font-size:6.70px;line-height:8.04px;font-weight:normal;color:#fff;transform:scaleX(0.9293);transform-origin:0 50%;-webkit-text-stroke:0.08px #fff;">Event</div>
<div class="t" style="left:97.00px;top:230.06px;font-size:6.90px;line-height:8.28px;font-weight:bold;color:#fff;transform:scaleX(0.9566);transform-origin:0 50%;">DATE OF START/END</div>
<div class="t" style="left:183.50px;top:230.06px;font-size:6.90px;line-height:8.28px;font-weight:bold;color:#fff;letter-spacing:-0.1px;">NAME</div>
<div class="t" style="left:315.70px;top:230.06px;font-size:6.90px;line-height:8.28px;font-weight:bold;color:#fff;transform:scaleX(0.8819);transform-origin:0 50%;">PLACE</div>
<div class="t" style="left:395.00px;top:230.06px;font-size:6.90px;line-height:8.28px;font-weight:bold;color:#fff;letter-spacing:-0.1px;">COUNTRY</div>
<div class="t" style="left:461.00px;top:230.06px;font-size:6.90px;line-height:8.28px;font-weight:bold;color:#fff;letter-spacing:-0.1px;">WEAPON</div>
<div class="t" style="left:527.00px;top:230.06px;font-size:6.90px;line-height:8.28px;font-weight:bold;color:#fff;transform:scaleX(0.9361);transform-origin:0 50%;">GENDER</div>
<div class="t" style="left:573.00px;top:230.06px;font-size:6.90px;line-height:8.28px;font-weight:bold;color:#fff;transform:scaleX(0.9352);transform-origin:0 50%;">CATEGORY</div>
<div class="t" style="left:639.20px;top:230.06px;font-size:6.90px;line-height:8.28px;font-weight:bold;color:#fff;transform:scaleX(0.9050);transform-origin:0 50%;">EVENT</div>
<div class="t" style="left:686.00px;top:230.06px;font-size:6.90px;line-height:8.28px;font-weight:bold;color:#fff;letter-spacing:-0.1px;">INFO</div>
<div class="t" style="left:97.00px;top:250.50px;font-size:7.00px;line-height:8.40px;font-weight:normal;color:#262626;-webkit-text-stroke:0.18px #262626;">05/02 - 07/02/2021</div>
<div class="t" style="left:183.70px;top:250.53px;font-size:6.95px;line-height:8.34px;font-weight:bold;color:#000;-webkit-text-stroke:0.15px #000;">Non EFC tournament Brescia</div>
<div class="t" style="left:315.50px;top:250.50px;font-size:7.00px;line-height:8.40px;font-weight:normal;color:#262626;-webkit-text-stroke:0.18px #262626;">Brescia</div>
<div class="t" style="left:395.00px;top:250.50px;font-size:7.00px;line-height:8.40px;font-weight:normal;color:#262626;-webkit-text-stroke:0.18px #262626;">Italy</div>
<div class="t" style="left:461.00px;top:250.50px;font-size:7.00px;line-height:8.40px;font-weight:normal;color:#262626;-webkit-text-stroke:0.18px #262626;">Foil Epee</div>
<div class="t" style="left:573.00px;top:250.50px;font-size:7.00px;line-height:8.40px;font-weight:normal;color:#262626;-webkit-text-stroke:0.18px #262626;">U12,U14</div>
<div class="t" style="left:97.00px;top:270.80px;font-size:7.00px;line-height:8.40px;font-weight:normal;color:#262626;-webkit-text-stroke:0.18px #262626;">27/02 - 02/03/2020</div>
<div class="t" style="left:183.70px;top:270.83px;font-size:6.95px;line-height:8.34px;font-weight:bold;color:#000;-webkit-text-stroke:0.15px #000;">European Championships U20</div>
<div class="t" style="left:315.50px;top:270.80px;font-size:7.00px;line-height:8.40px;font-weight:normal;color:#262626;-webkit-text-stroke:0.18px #262626;">Porec</div>
<div class="t" style="left:395.00px;top:270.80px;font-size:7.00px;line-height:8.40px;font-weight:normal;color:#262626;-webkit-text-stroke:0.18px #262626;">Croatia</div>
<div class="t" style="left:461.00px;top:270.80px;font-size:7.00px;line-height:8.40px;font-weight:normal;color:#262626;-webkit-text-stroke:0.18px #262626;">Foil Epee Sabre</div>
<div class="t" style="left:573.00px;top:270.80px;font-size:7.00px;line-height:8.40px;font-weight:normal;color:#262626;-webkit-text-stroke:0.18px #262626;">Juniors</div>
<div class="t" style="left:97.00px;top:291.10px;font-size:7.00px;line-height:8.40px;font-weight:normal;color:#262626;-webkit-text-stroke:0.18px #262626;">22/02 - 23/02/2020</div>
<div class="t" style="left:183.70px;top:291.13px;font-size:6.95px;line-height:8.34px;font-weight:bold;color:#000;-webkit-text-stroke:0.15px #000;">U23 Circuit</div>
<div class="t" style="left:315.50px;top:291.10px;font-size:7.00px;line-height:8.40px;font-weight:normal;color:#262626;-webkit-text-stroke:0.18px #262626;">Berlin</div>
<div class="t" style="left:395.00px;top:291.10px;font-size:7.00px;line-height:8.40px;font-weight:normal;color:#262626;-webkit-text-stroke:0.18px #262626;">Germany</div>
<div class="t" style="left:461.00px;top:291.10px;font-size:7.00px;line-height:8.40px;font-weight:normal;color:#262626;-webkit-text-stroke:0.18px #262626;">Epee</div>
<div class="t" style="left:573.00px;top:291.10px;font-size:7.00px;line-height:8.40px;font-weight:normal;color:#262626;-webkit-text-stroke:0.18px #262626;">U23</div>
<div class="t" style="left:97.00px;top:311.40px;font-size:7.00px;line-height:8.40px;font-weight:normal;color:#262626;-webkit-text-stroke:0.18px #262626;">22/02 - 23/02/2020</div>
<div class="t" style="left:183.70px;top:311.43px;font-size:6.95px;line-height:8.34px;font-weight:bold;color:#000;-webkit-text-stroke:0.15px #000;">U23 Circuit</div>
<div class="t" style="left:315.50px;top:311.40px;font-size:7.00px;line-height:8.40px;font-weight:normal;color:#262626;-webkit-text-stroke:0.18px #262626;">Mannheim</div>
<div class="t" style="left:395.00px;top:311.40px;font-size:7.00px;line-height:8.40px;font-weight:normal;color:#262626;-webkit-text-stroke:0.18px #262626;">Germany</div>
<div class="t" style="left:461.00px;top:311.40px;font-size:7.00px;line-height:8.40px;font-weight:normal;color:#262626;-webkit-text-stroke:0.18px #262626;">Epee</div>
<div class="t" style="left:573.00px;top:311.40px;font-size:7.00px;line-height:8.40px;font-weight:normal;color:#262626;-webkit-text-stroke:0.18px #262626;">U23</div>
<div class="t" style="left:97.00px;top:331.70px;font-size:7.00px;line-height:8.40px;font-weight:normal;color:#262626;-webkit-text-stroke:0.18px #262626;">22/02 - 26/02/2020</div>
<div class="t" style="left:183.70px;top:331.73px;font-size:6.95px;line-height:8.34px;font-weight:bold;color:#000;-webkit-text-stroke:0.15px #000;">European Championships U17</div>
<div class="t" style="left:315.50px;top:331.70px;font-size:7.00px;line-height:8.40px;font-weight:normal;color:#262626;-webkit-text-stroke:0.18px #262626;">Porec</div>
<div class="t" style="left:395.00px;top:331.70px;font-size:7.00px;line-height:8.40px;font-weight:normal;color:#262626;-webkit-text-stroke:0.18px #262626;">Croatia</div>
<div class="t" style="left:461.00px;top:331.70px;font-size:7.00px;line-height:8.40px;font-weight:normal;color:#262626;-webkit-text-stroke:0.18px #262626;">Foil Epee Sabre</div>
<div class="t" style="left:573.00px;top:331.70px;font-size:7.00px;line-height:8.40px;font-weight:normal;color:#262626;-webkit-text-stroke:0.18px #262626;">Cadets</div>
<div class="t" style="left:97.00px;top:352.00px;font-size:7.00px;line-height:8.40px;font-weight:normal;color:#262626;-webkit-text-stroke:0.18px #262626;">22/02 - 23/02/2020</div>
<div class="t" style="left:183.70px;top:352.03px;font-size:6.95px;line-height:8.34px;font-weight:bold;color:#000;-webkit-text-stroke:0.15px #000;">U23 Circuit</div>
<div class="t" style="left:315.50px;top:352.00px;font-size:7.00px;line-height:8.40px;font-weight:normal;color:#262626;-webkit-text-stroke:0.18px #262626;">Wien</div>
<div class="t" style="left:395.00px;top:352.00px;font-size:7.00px;line-height:8.40px;font-weight:normal;color:#262626;-webkit-text-stroke:0.18px #262626;">Austria</div>
<div class="t" style="left:461.00px;top:352.00px;font-size:7.00px;line-height:8.40px;font-weight:normal;color:#262626;-webkit-text-stroke:0.18px #262626;">Sabre</div>
<div class="t" style="left:573.00px;top:352.00px;font-size:7.00px;line-height:8.40px;font-weight:normal;color:#262626;-webkit-text-stroke:0.18px #262626;">U23</div>
<div class="t" style="left:97.00px;top:372.30px;font-size:7.00px;line-height:8.40px;font-weight:normal;color:#262626;-webkit-text-stroke:0.18px #262626;">15/02 - 16/02/2020</div>
<div class="t" style="left:183.70px;top:372.33px;font-size:6.95px;line-height:8.34px;font-weight:bold;color:#000;-webkit-text-stroke:0.15px #000;">U23 Circuit</div>
<div class="t" style="left:315.50px;top:372.30px;font-size:7.00px;line-height:8.40px;font-weight:normal;color:#262626;-webkit-text-stroke:0.18px #262626;">Roma</div>
<div class="t" style="left:395.00px;top:372.30px;font-size:7.00px;line-height:8.40px;font-weight:normal;color:#262626;-webkit-text-stroke:0.18px #262626;">Italy</div>
<div class="t" style="left:461.00px;top:372.30px;font-size:7.00px;line-height:8.40px;font-weight:normal;color:#262626;-webkit-text-stroke:0.18px #262626;">Foil Sabre</div>
<div class="t" style="left:573.00px;top:372.30px;font-size:7.00px;line-height:8.40px;font-weight:normal;color:#262626;-webkit-text-stroke:0.18px #262626;">U23</div>
<div class="t" style="left:97.00px;top:392.60px;font-size:7.00px;line-height:8.40px;font-weight:normal;color:#262626;-webkit-text-stroke:0.18px #262626;">15/02 - 16/02/2020</div>
<div class="t" style="left:183.70px;top:392.63px;font-size:6.95px;line-height:8.34px;font-weight:bold;color:#000;-webkit-text-stroke:0.15px #000;">U14 Pilot project European Circuit</div>
<div class="t" style="left:315.50px;top:392.60px;font-size:7.00px;line-height:8.40px;font-weight:normal;color:#262626;-webkit-text-stroke:0.18px #262626;">Zagreb</div>
<div class="t" style="left:395.00px;top:392.60px;font-size:7.00px;line-height:8.40px;font-weight:normal;color:#262626;-webkit-text-stroke:0.18px #262626;">Croatia</div>
<div class="t" style="left:461.00px;top:392.60px;font-size:7.00px;line-height:8.40px;font-weight:normal;color:#262626;-webkit-text-stroke:0.18px #262626;">Foil Epee</div>
<div class="t" style="left:573.00px;top:392.60px;font-size:7.00px;line-height:8.40px;font-weight:normal;color:#262626;-webkit-text-stroke:0.18px #262626;">U14</div>
<div class="t" style="left:97.00px;top:412.90px;font-size:7.00px;line-height:8.40px;font-weight:normal;color:#262626;-webkit-text-stroke:0.18px #262626;">10/02/2020</div>
<div class="t" style="left:183.70px;top:412.93px;font-size:6.95px;line-height:8.34px;font-weight:bold;color:#000;-webkit-text-stroke:0.15px #000;">Coupe d´Europe</div>
<div class="t" style="left:315.50px;top:412.90px;font-size:7.00px;line-height:8.40px;font-weight:normal;color:#262626;-webkit-text-stroke:0.18px #262626;">Torino</div>
<div class="t" style="left:395.00px;top:412.90px;font-size:7.00px;line-height:8.40px;font-weight:normal;color:#262626;-webkit-text-stroke:0.18px #262626;">Italy</div>
<div class="t" style="left:461.00px;top:412.90px;font-size:7.00px;line-height:8.40px;font-weight:normal;color:#262626;-webkit-text-stroke:0.18px #262626;">Foil</div>
<div class="t" style="left:573.00px;top:412.90px;font-size:7.00px;line-height:8.40px;font-weight:normal;color:#262626;-webkit-text-stroke:0.18px #262626;">Seniors</div>
<div class="t" style="left:97.00px;top:433.20px;font-size:7.00px;line-height:8.40px;font-weight:normal;color:#262626;-webkit-text-stroke:0.18px #262626;">08/02 - 09/02/2020</div>
<div class="t" style="left:183.70px;top:433.23px;font-size:6.95px;line-height:8.34px;font-weight:bold;color:#000;-webkit-text-stroke:0.15px #000;">Cadet Circuit</div>
<div class="t" style="left:315.50px;top:433.20px;font-size:7.00px;line-height:8.40px;font-weight:normal;color:#262626;-webkit-text-stroke:0.18px #262626;">Krakow</div>
<div class="t" style="left:395.00px;top:433.20px;font-size:7.00px;line-height:8.40px;font-weight:normal;color:#262626;-webkit-text-stroke:0.18px #262626;">Poland</div>
<div class="t" style="left:461.00px;top:433.20px;font-size:7.00px;line-height:8.40px;font-weight:normal;color:#262626;-webkit-text-stroke:0.18px #262626;">Epee</div>
<div class="t" style="left:573.00px;top:433.20px;font-size:7.00px;line-height:8.40px;font-weight:normal;color:#262626;-webkit-text-stroke:0.18px #262626;">Cadets</div>
<div class="t" style="left:97.00px;top:453.50px;font-size:7.00px;line-height:8.40px;font-weight:normal;color:#262626;-webkit-text-stroke:0.18px #262626;">08/02 - 09/02/2020</div>
<div class="t" style="left:183.70px;top:453.53px;font-size:6.95px;line-height:8.34px;font-weight:bold;color:#000;-webkit-text-stroke:0.15px #000;">Cadet Circuit</div>
<div class="t" style="left:315.50px;top:453.50px;font-size:7.00px;line-height:8.40px;font-weight:normal;color:#262626;-webkit-text-stroke:0.18px #262626;">Satu Mare</div>
<div class="t" style="left:395.00px;top:453.50px;font-size:7.00px;line-height:8.40px;font-weight:normal;color:#262626;-webkit-text-stroke:0.18px #262626;">Romania</div>
<div class="t" style="left:461.00px;top:453.50px;font-size:7.00px;line-height:8.40px;font-weight:normal;color:#262626;-webkit-text-stroke:0.18px #262626;">Foil</div>
<div class="t" style="left:573.00px;top:453.50px;font-size:7.00px;line-height:8.40px;font-weight:normal;color:#262626;-webkit-text-stroke:0.18px #262626;">Cadets</div>
<div id="ov"></div>
</div>
</body>
</html>
